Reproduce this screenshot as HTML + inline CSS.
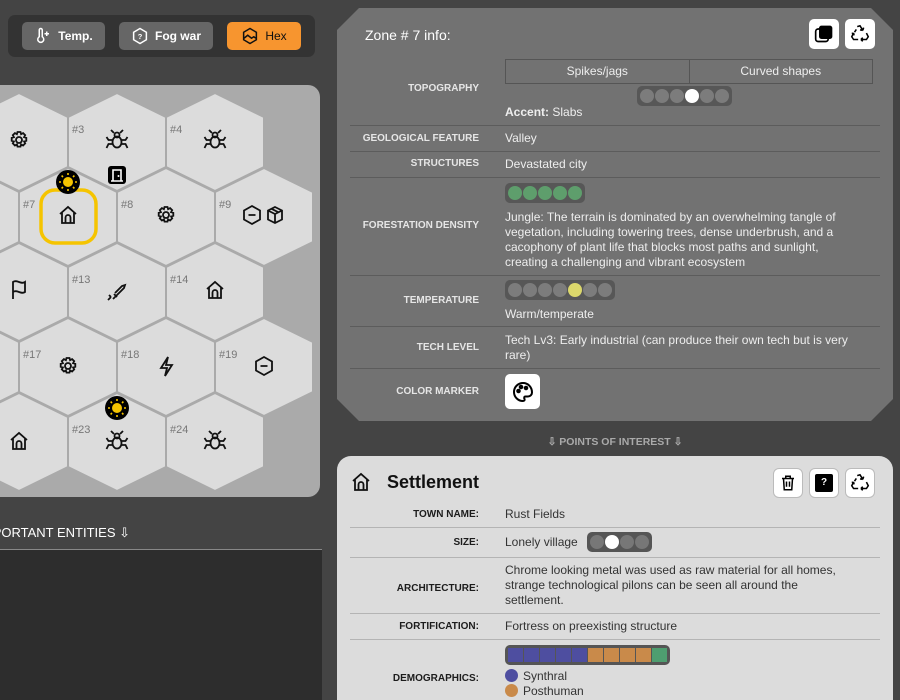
<!DOCTYPE html>
<html style="overflow:hidden;height:700px"><head><meta charset="utf-8"><style>
*{box-sizing:border-box;margin:0;padding:0}
body{width:900px;height:700px;background:#444;font-family:"Liberation Sans",Arial,sans-serif;position:relative;overflow:hidden}
.abs{position:absolute}
.tb{left:8px;top:15px;width:307px;height:42px;background:#333;border-radius:7px}
.btn{position:absolute;top:7px;height:28px;border-radius:5px;background:#666;color:#fff;font-size:12px;font-weight:bold;display:flex;align-items:center;justify-content:center;gap:6px}
.zone{left:337px;top:8px;width:556px;height:413px;background:#727272;clip-path:polygon(22px 0,534px 0,556px 22px,556px 391px,534px 413px,22px 413px,0 391px,0 22px)}
.lbl{position:absolute;left:0;width:142px;text-align:right;font-size:10px;font-weight:bold;color:#e6e6e6;text-transform:uppercase}
.sep{position:absolute;left:13px;width:530px;height:1px;background:#5c5c5c}
.val{position:absolute;left:168px;color:#eee;font-size:12px;line-height:15px}
.pill{position:absolute;height:20px;background:#575757;border-radius:5px;display:flex;align-items:center;padding:0 3px;gap:1px}
.pill i{display:block;width:14px;height:14px;border-radius:50%;background:#7c7c7c}
.wb{position:absolute;width:30px;height:30px;background:#fff;border-radius:5px;display:flex;align-items:center;justify-content:center}
.set{left:337px;top:456px;width:556px;height:244px;background:#dcdcdc;border-radius:14px 14px 0 0}
.sl{position:absolute;left:0;width:142px;text-align:right;font-size:10px;font-weight:bold;color:#1c1c1c}
.sv{position:absolute;left:168px;color:#333;font-size:12px;line-height:15px}
.ss{position:absolute;left:13px;width:530px;height:1px;background:#b4b4b4}
.ob{position:absolute;top:12px;width:30px;height:30px;background:#fff;border:1px solid #bbb;border-radius:6px;display:flex;align-items:center;justify-content:center}
</style></head><body>

<div class="abs tb">
 <div class="btn" style="left:14px;width:83px"><svg width="18" height="18" viewBox="0 0 24 24" fill="none" stroke="#fff" stroke-width="2"><path d="M7 4a2 2 0 0 1 4 0v9a4 4 0 1 1-4 0z"/><path d="M17 6v6M14 9h6"/></svg>Temp.</div>
 <div class="btn" style="left:111px;width:94px"><svg width="18" height="18" viewBox="0 0 24 24" fill="none" stroke="#fff" stroke-width="2"><path d="M12 2l8.5 5v10L12 22l-8.5-5V7z"/><text x="12" y="16" font-size="10" fill="#fff" stroke="none" text-anchor="middle" font-weight="bold" font-family="Liberation Sans">?</text></svg>Fog war</div>
 <div class="btn" style="left:219px;width:74px;background:#f7952f;color:#111;font-weight:normal"><svg width="18" height="18" viewBox="0 0 24 24" fill="none" stroke="#111" stroke-width="2"><path d="M12 2l8.5 5v10L12 22l-8.5-5V7z"/><path d="M4 15l5-4 5 4 3-2 3 2"/></svg>Hex</div>
</div>

<svg class="abs" style="left:0;top:85px" width="320" height="412" viewBox="0 85 320 412">
 <defs>
  <path id="h" d="M0,-49 L49,-25 L49,25 L0,49 L-49,25 L-49,-25Z"/>
  <g id="gear" fill="none" stroke="#111" stroke-width="1.8"><circle r="3"/><path d="M-1.5,-8h3l.6,2.2 2-1.1 2.1 2.1-1.1 2 2.2.6v3l-2.2.6 1.1 2-2.1 2.1-2-1.1-.6 2.2h-3l-.6-2.2-2 1.1-2.1-2.1 1.1-2-2.2-.6v-3l2.2-.6-1.1-2 2.1-2.1 2 1.1z"/></g>
  <g id="spider" fill="none" stroke="#111" stroke-width="1.8"><ellipse cx="0" cy="2" rx="4.5" ry="5.5"/><circle cy="-5" r="2.5"/><path d="M-4.5,0h-4l-2-3M4.5,0h4l2-3M-4.5,4h-4l-2 4M4.5,4h4l2 4M-3-7l-3-3M3-7l3-3"/></g>
  <g id="house" fill="none" stroke="#111" stroke-width="1.8"><path d="M-8,-1L0,-8L8,-1M-6,-2.5V8H6V-2.5M-2.5,8V2.5A2.5,2.5 0 0 1 2.5,2.5V8"/></g>
  <g id="minhex" fill="none" stroke="#111" stroke-width="1.8"><path d="M0,-9L8,-4.5V4.5L0,9L-8,4.5V-4.5Z M-3.5,0H3.5"/></g>
 </defs>
 <rect x="0" y="85" width="320" height="412" rx="12" fill="#aaa"/>
 <rect x="0" y="85" width="12" height="412" fill="#aaa"/>
 <g fill="#dcdcdc" stroke="#aaa" stroke-width="2">
  <use href="#h" x="19" y="142"/><use href="#h" x="117" y="142"/><use href="#h" x="215" y="142"/>
  <use href="#h" x="-30" y="217"/><use href="#h" x="68" y="217"/><use href="#h" x="166" y="217"/><use href="#h" x="264" y="217"/>
  <use href="#h" x="19" y="292"/><use href="#h" x="117" y="292"/><use href="#h" x="215" y="292"/>
  <use href="#h" x="-30" y="367"/><use href="#h" x="68" y="367"/><use href="#h" x="166" y="367"/><use href="#h" x="264" y="367"/>
  <use href="#h" x="19" y="442"/><use href="#h" x="117" y="442"/><use href="#h" x="215" y="442"/>
 </g>
 <g font-size="11" fill="#777" font-family="Liberation Sans">
  <text x="72" y="133">#3</text><text x="170" y="133">#4</text>
  <text x="23" y="208">#7</text><text x="121" y="208">#8</text><text x="219" y="208">#9</text>
  <text x="72" y="283">#13</text><text x="170" y="283">#14</text>
  <text x="23" y="358">#17</text><text x="121" y="358">#18</text><text x="219" y="358">#19</text>
  <text x="72" y="433">#23</text><text x="170" y="433">#24</text>
 </g>
 <use href="#gear" x="19" y="140"/><use href="#spider" x="117" y="140"/><use href="#spider" x="215" y="140"/>
 <rect x="41" y="190" width="55" height="53" rx="14" fill="none" stroke="#f5c400" stroke-width="3.5"/>
 <use href="#house" x="68" y="215"/><use href="#gear" x="166" y="215"/>
 <use href="#minhex" x="252" y="215"/>
 <g fill="none" stroke="#111" stroke-width="1.8" transform="translate(275,215)"><path d="M0,-8L7,-4.5V4.5L0,8L-7,4.5V-4.5Z M-7,-4.5L0,-1L7,-4.5M0,-1V8M-3.5,-6.2L3.5,-2.7"/></g>
 <g fill="none" stroke="#111" stroke-width="1.8" transform="translate(19,290)"><path d="M-6,9V-8c4-3 8,3 12,0V2c-4,3-8-3-12,0"/></g>
 <g fill="none" stroke="#111" stroke-width="1.8" transform="translate(117,290)"><path d="M-6,7L-8,5M-6,7l-3,3M-4,9l5-5M-3,4l3,3M-2,3l7-7 3-1-1 3-7 7"/></g>
 <use href="#house" x="215" y="290"/>
 <use href="#gear" x="68" y="366"/>
 <g fill="none" stroke="#111" stroke-width="1.8" transform="translate(166,366)"><path d="M2,-9L-5,2h6l-2,8 7-11H0z"/></g>
 <use href="#minhex" x="264" y="366"/>
 <use href="#house" x="19" y="441"/><use href="#spider" x="117" y="441"/><use href="#spider" x="215" y="441"/>
 <g transform="translate(68,182)"><circle r="12" fill="#000"/><circle r="5" fill="#f5c400"/><g stroke="#f5c400" stroke-width="1.6"><path d="M0,-9v2M0,7v2M-9,0h2M7,0h2M-6.4,-6.4l1.4,1.4M5,5l1.4,1.4M-6.4,6.4l1.4-1.4M5,-5l1.4-1.4"/></g></g>
 <g transform="translate(117,408)"><circle r="12" fill="#000"/><circle r="5" fill="#f5c400"/><g stroke="#f5c400" stroke-width="1.6"><path d="M0,-9v2M0,7v2M-9,0h2M7,0h2M-6.4,-6.4l1.4,1.4M5,5l1.4,1.4M-6.4,6.4l1.4-1.4M5,-5l1.4-1.4"/></g></g>
 <g transform="translate(117,175)"><rect x="-9" y="-9" width="18" height="18" rx="3" fill="#000"/><path d="M-4,6V-5h8V6M-6,6h12" stroke="#fff" stroke-width="1.6" fill="none"/><circle cx="1.5" cy="1" r="1" fill="#fff"/></g>
</svg>

<div class="abs" style="right:770px;top:525px;color:#fff;font-size:13px;white-space:nowrap">IMPORTANT ENTITIES ⇩</div>
<div class="abs" style="left:0;top:549px;width:322px;height:1px;background:#888"></div>
<div class="abs" style="left:0;top:550px;width:322px;height:150px;background:#2d2d2d"></div>

<div class="abs zone">
 <div class="abs" style="left:28px;top:19px;color:#fff;font-size:14px">Zone # 7 info:</div>
 <div class="wb" style="left:472px;top:11px"><svg width="20" height="20" viewBox="0 0 24 24"><rect x="2" y="6" width="15" height="15" rx="3" fill="none" stroke="#000" stroke-width="2"/><rect x="6" y="2" width="16" height="16" rx="3" fill="#000"/></svg></div>
 <div class="wb" style="left:508px;top:11px"><svg width="22" height="22" viewBox="0 0 24 24" fill="none" stroke="#000" stroke-width="1.7"><path d="M9 4l3-1 3 5M15 8l1-3M15 8l-3-.5M19 11l2 4-2 3h-6M13 18l2-2M13 18l2 2M10 18H5l-2-3 2-4M5 11l-2 .5M5 11l.5 2.5M8 7l-2 3"/></svg></div>
 <div class="lbl" style="top:75px">Topography</div>
 <div class="abs" style="left:168px;top:51px;width:368px;height:25px;display:flex;border:1px solid #555">
  <div style="flex:1;border-right:1px solid #555;text-align:center;line-height:23px;color:#eee;font-size:12px">Spikes/jags</div>
  <div style="flex:1;text-align:center;line-height:23px;color:#eee;font-size:12px">Curved shapes</div></div>
 <div class="pill" style="left:300px;top:78px"><i></i><i></i><i></i><i style="background:#fff"></i><i></i><i></i></div>
 <div class="val" style="top:97px"><b>Accent:</b> Slabs</div>
 <div class="sep" style="top:117px"></div>
 <div class="lbl" style="top:125px">Geological feature</div><div class="val" style="top:123px">Valley</div>
 <div class="sep" style="top:143px"></div>
 <div class="lbl" style="top:150px">Structures</div><div class="val" style="top:149px">Devastated city</div>
 <div class="sep" style="top:169px"></div>
 <div class="pill" style="left:168px;top:175px;gap:1px"><i style="background:#5e9e6c"></i><i style="background:#5e9e6c"></i><i style="background:#5e9e6c"></i><i style="background:#5e9e6c"></i><i style="background:#5e9e6c"></i></div>
 <div class="lbl" style="top:212px">Forestation density</div>
 <div class="val" style="top:202px;width:350px">Jungle: The terrain is dominated by an overwhelming tangle of vegetation, including towering trees, dense underbrush, and a cacophony of plant life that blocks most paths and sunlight, creating a challenging and vibrant ecosystem</div>
 <div class="sep" style="top:267px"></div>
 <div class="pill" style="left:168px;top:272px"><i></i><i></i><i></i><i></i><i style="background:#dcd86c"></i><i></i><i></i></div>
 <div class="lbl" style="top:287px">Temperature</div>
 <div class="val" style="top:299px">Warm/temperate</div>
 <div class="sep" style="top:318px"></div>
 <div class="lbl" style="top:334px">Tech level</div>
 <div class="val" style="top:325px;width:365px">Tech Lv3: Early industrial (can produce their own tech but is very rare)</div>
 <div class="sep" style="top:360px"></div>
 <div class="lbl" style="top:378px">Color marker</div>
 <div class="wb" style="left:168px;top:366px;width:35px;height:35px"><svg width="24" height="24" viewBox="0 0 24 24" fill="none" stroke="#000" stroke-width="2"><path d="M12 3a9 9 0 1 0 0 18c1.5 0 2-1 1.5-2s-.5-2.5 1-2.5H17a4 4 0 0 0 4-4C21 7 17 3 12 3z"/><circle cx="7.5" cy="11" r="1.3" fill="#000"/><circle cx="10" cy="7" r="1.3" fill="#000"/><circle cx="15" cy="8" r="1.3" fill="#000"/></svg></div>
</div>

<div class="abs" style="left:337px;top:436px;width:556px;text-align:center;color:#aaa;font-size:10.5px;font-weight:bold">⇩ POINTS OF INTEREST ⇩</div>

<div class="abs set">
 <svg class="abs" style="left:14px;top:16px" width="20" height="20" viewBox="-10 -10 20 20"><path d="M-8,-1L0,-8L8,-1M-6,-2.5V8H6V-2.5M-2.5,8V2.5A2.5,2.5 0 0 1 2.5,2.5V8" fill="none" stroke="#111" stroke-width="1.8"/></svg>
 <div class="abs" style="left:50px;top:16px;font-size:18px;font-weight:bold;color:#111">Settlement</div>
 <div class="ob" style="left:436px"><svg width="18" height="18" viewBox="0 0 24 24" fill="none" stroke="#000" stroke-width="2"><path d="M4 6h16M9 6V3h6v3M6 6l1 15h10l1-15M10 10v7M14 10v7"/></svg></div>
 <div class="ob" style="left:472px"><div style="width:18px;height:18px;background:#000;border-radius:2px;color:#fff;font-size:10px;font-weight:bold;text-align:center;line-height:18px">?</div></div>
 <div class="ob" style="left:508px"><svg width="22" height="22" viewBox="0 0 24 24" fill="none" stroke="#000" stroke-width="1.7"><path d="M9 4l3-1 3 5M15 8l1-3M15 8l-3-.5M19 11l2 4-2 3h-6M13 18l2-2M13 18l2 2M10 18H5l-2-3 2-4M5 11l-2 .5M5 11l.5 2.5M8 7l-2 3"/></svg></div>
 <div class="sl" style="top:53px">TOWN NAME:</div><div class="sv" style="top:51px">Rust Fields</div>
 <div class="ss" style="top:71px"></div>
 <div class="sl" style="top:81px">SIZE:</div><div class="sv" style="top:79px">Lonely village</div>
 <div class="pill" style="left:250px;top:76px;background:#555"><i style="background:#777"></i><i style="background:#fff"></i><i style="background:#777"></i><i style="background:#777"></i></div>
 <div class="ss" style="top:101px"></div>
 <div class="sl" style="top:127px">ARCHITECTURE:</div>
 <div class="sv" style="top:107px;width:345px">Chrome looking metal was used as raw material for all homes, strange technological pilons can be seen all around the settlement.</div>
 <div class="ss" style="top:157px"></div>
 <div class="sl" style="top:165px">FORTIFICATION:</div><div class="sv" style="top:163px">Fortress on preexisting structure</div>
 <div class="ss" style="top:183px"></div>
 <div class="abs" style="left:168px;top:189px;width:165px;height:20px;background:#555;border-radius:5px;display:flex;gap:1px;padding:3px">
  <b style="flex:1;background:#4e4ea0"></b><b style="flex:1;background:#4e4ea0"></b><b style="flex:1;background:#4e4ea0"></b><b style="flex:1;background:#4e4ea0"></b><b style="flex:1;background:#4e4ea0"></b><b style="flex:1;background:#c98a4a"></b><b style="flex:1;background:#c98a4a"></b><b style="flex:1;background:#c98a4a"></b><b style="flex:1;background:#c98a4a"></b><b style="flex:1;background:#4e9e70"></b></div>
 <div class="sl" style="top:217px">DEMOGRAPHICS:</div>
 <div class="sv" style="top:213px"><span style="display:inline-block;width:13px;height:13px;border-radius:50%;background:#4e4ea0;vertical-align:-2px;margin-right:5px"></span>Synthral</div>
 <div class="sv" style="top:228px"><span style="display:inline-block;width:13px;height:13px;border-radius:50%;background:#c98a4a;vertical-align:-2px;margin-right:5px"></span>Posthuman</div>
</div>
</body></html>
